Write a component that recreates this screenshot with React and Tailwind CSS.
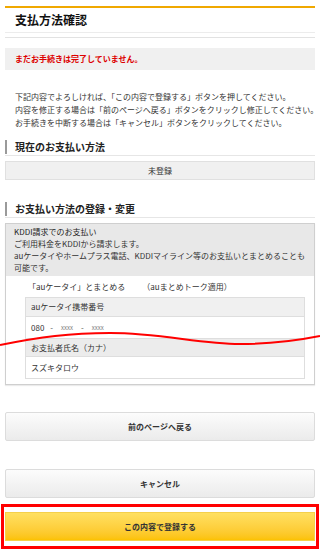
import React from "react";

const F = { fontFamily: '"Noto Sans CJK JP", "Noto Sans", sans-serif' };

function Heading({ children }) {
  return (
    <div className="flex items-center border-b border-[#e6e6e6] pb-[1px]">
      <div className="h-[14px] border-l-[2px] border-[#9a9a9a] pl-[8px] text-[10px] font-bold leading-[14px] text-[#222]">
        {children}
      </div>
    </div>
  );
}

function GrayButton({ children }) {
  return (
    <div className="flex h-[29px] items-center justify-center rounded-[2px] border border-[#dcdcdc] bg-gradient-to-b from-[#fcfcfc] to-[#ebebeb] text-[8px] font-bold text-[#333]">
      {children}
    </div>
  );
}

export default function App() {
  return (
    <div style={F} className="relative h-[551px] w-[320px] overflow-hidden bg-white text-[#333]">
      <div className="px-[5px] pt-[6px]">
        <div className="h-[2px] bg-[#f0a800]" />
        <div className="flex h-[25px] items-center border-b border-[#ececec] pl-[10px] text-[12px] font-bold text-[#111]">
          支払方法確認
        </div>
        <div className="mt-[4px] h-px bg-[#e2e2e2]" />

        <div className="mt-[10px] flex h-[22px] items-center bg-[#f0f0f0] pl-[10px] text-[8px] font-bold text-[#dd0000]">
          まだお手続きは完了していません。
        </div>

        <div className="mt-[20px] pl-[10px] text-[8px] leading-[13px] text-[#333] whitespace-nowrap">
          <p>下記内容でよろしければ、「この内容で登録する」ボタンを押してください。</p>
          <p>内容を修正する場合は「前のページへ戻る」ボタンをクリックし修正してください。</p>
          <p>お手続きを中断する場合は「キャンセル」ボタンをクリックしてください。</p>
        </div>

        <div className="mt-[11px]">
          <Heading>現在のお支払い方法</Heading>
        </div>
        <div className="mt-[5px] flex h-[19px] items-center justify-center border border-[#e0e0e0] bg-[#f0f0f0] text-[8px] text-[#333]">
          未登録
        </div>

        <div className="mt-[22px]">
          <Heading>お支払い方法の登録・変更</Heading>
        </div>

        <div className="mt-[5px] border border-[#cfcfcf] shadow-[0_1px_1px_rgba(0,0,0,0.08)]">
          <div className="bg-[#e8e8e8] px-[8px] pb-[2px] pt-[2px] text-[8px] leading-[12px] text-[#333]">
            <p className="text-[#222]">KDDI請求でのお支払い</p>
            <p>ご利用料金をKDDIから請求します。</p>
            <p>auケータイやホームプラス電話、KDDIマイライン等のお支払いとまとめることも</p>
            <p>可能です。</p>
          </div>
          <div className="bg-white pb-[5px] pl-[19px] pr-[9px] pt-[4px] text-[8px] text-[#333]">
            <div className="flex h-[14px] items-center pl-[3px]">
              <span>「auケータイ」とまとめる</span>
              <span className="ml-[17px]">（auまとめトーク適用）</span>
            </div>
            <div className="mt-[3px] border border-[#dedede]">
              <div className="flex h-[19px] items-center border-b border-[#dedede] bg-[#f0f0f0] pl-[5px]">
                auケータイ携帯番号
              </div>
              <div className="flex h-[22px] items-center border-b border-[#dedede] pl-[5px]">
                <span>080</span>
                <span className="ml-[6px] text-[#555]">-</span>
                <span className="ml-[8px] text-[6px] text-[#777]">xxxx</span>
                <span className="ml-[8px] text-[#555]">-</span>
                <span className="ml-[8px] text-[6px] text-[#777]">xxxx</span>
              </div>
              <div className="flex h-[18px] items-center border-b border-[#dedede] bg-[#ececec] pl-[5px]">
                お支払者氏名（カナ）
              </div>
              <div className="flex h-[21px] items-center pl-[5px]">スズキタロウ</div>
            </div>
          </div>
        </div>

        <div className="mt-[27px]">
          <GrayButton>前のページへ戻る</GrayButton>
        </div>
        <div className="mt-[28px]">
          <GrayButton>キャンセル</GrayButton>
        </div>
      </div>

      <div className="mx-[1px] mt-[6px] border-[3px] border-[#ff0000] px-[1px] py-[5px]">
        <div className="flex h-[29px] items-center justify-center border border-[#f5d04a] bg-gradient-to-b from-[#ffe060] to-[#fcc200] text-[8px] font-bold text-[#333]">
          この内容で登録する
        </div>
      </div>

      <svg
        className="pointer-events-none absolute left-0 top-0"
        width="320"
        height="551"
        viewBox="0 0 320 551"
      >
        <path
          d="M0 345 C 40 337, 70 333, 110 333 C 160 333, 200 344, 240 344 C 275 344, 300 340, 320 336"
          fill="none"
          stroke="#ff0000"
          strokeWidth="2"
        />
      </svg>
    </div>
  );
}
